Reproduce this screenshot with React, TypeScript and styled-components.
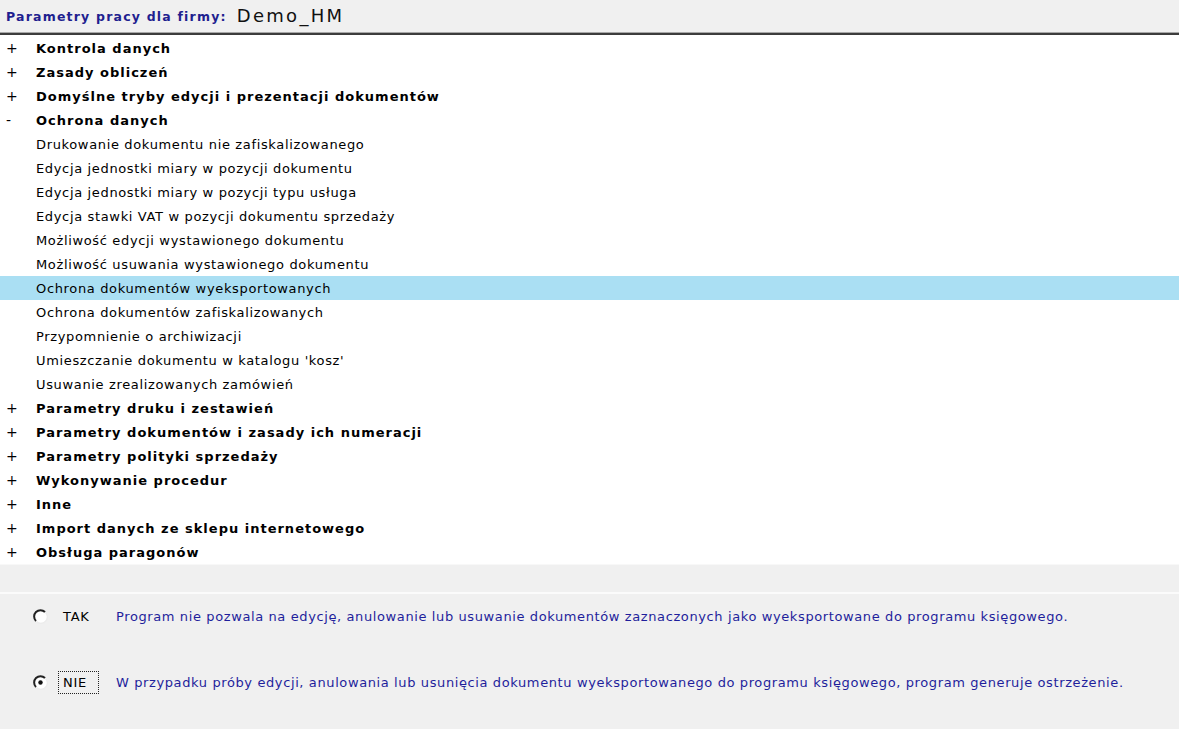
import * as React from 'react'
import styled, { createGlobalStyle } from 'styled-components'

const Global = createGlobalStyle`
  html, body {
    margin: 0;
    padding: 0;
    background: #f0f0f0;
    font-family: 'DejaVu Sans', 'Liberation Sans', sans-serif;
    overflow: hidden;
  }
`

const Page = styled.div`
  width: 1179px;
  height: 729px;
  display: flex;
  flex-direction: column;
  background: #f0f0f0;
`

const Header = styled.header`
  height: 32px;
  display: flex;
  align-items: center;
  gap: 10px;
  padding-left: 6px;
  border-bottom: 1px solid #a8a8a8;
  box-shadow: 0 2px 0 #3c3c3c;
  margin-bottom: 2px;
`

const HeaderLabel = styled.span`
  color: #1f1f8f;
  font-weight: bold;
  font-size: 12.5px;
  letter-spacing: 1.2px;
`

const Company = styled.span`
  color: #111;
  font-size: 18px;
  letter-spacing: 2.3px;
  margin-bottom: 1px;
`

const Tree = styled.ul`
  list-style: none;
  margin: 0;
  padding: 1px 0 0;
  background: #fff;
`

const Row = styled.li<{ $group?: boolean; $selected?: boolean }>`
  height: 24px;
  display: flex;
  align-items: center;
  color: #000;
  font-size: 13px;
  font-weight: ${p => (p.$group ? 'bold' : 'normal')};
  letter-spacing: ${p => (p.$group ? '1px' : '0.65px')};
  background: ${p => (p.$selected ? '#aadff3' : 'transparent')};
  white-space: nowrap;
`

const Sign = styled.span`
  width: 30px;
  padding-left: 6px;
  font-weight: normal;
  font-size: 14px;
  letter-spacing: 0;
`

const Band = styled.div`
  height: 27px;
  border-top: 1px solid #f8f8f8;
  border-bottom: 2px solid #fbfbfb;
`

const Options = styled.div`
  display: flex;
  flex-direction: column;
  gap: 42px;
  padding: 10px 0 0 33px;
`

const Option = styled.label`
  height: 24px;
  display: flex;
  align-items: center;
`

const Radio = styled.svg`
  width: 15px;
  height: 15px;
  flex: none;
`

const Choice = styled.span<{ $focused?: boolean }>`
  margin-left: 10px;
  width: 41px;
  height: 23px;
  box-sizing: border-box;
  display: flex;
  align-items: center;
  padding-left: 4px;
  font-size: 13px;
  letter-spacing: 0.7px;
  color: #000;
  border: 1px dotted ${p => (p.$focused ? '#222' : 'transparent')};
`

const Description = styled.span`
  margin-left: 17px;
  color: #1f1f9c;
  font-size: 13px;
  letter-spacing: 0.61px;
  white-space: nowrap;
`

type Item = { label: string; group?: boolean; open?: boolean; selected?: boolean }

const items: Item[] = [
  { label: 'Kontrola danych', group: true },
  { label: 'Zasady obliczeń', group: true },
  { label: 'Domyślne tryby edycji i prezentacji dokumentów', group: true },
  { label: 'Ochrona danych', group: true, open: true },
  { label: 'Drukowanie dokumentu nie zafiskalizowanego' },
  { label: 'Edycja jednostki miary w pozycji dokumentu' },
  { label: 'Edycja jednostki miary w pozycji typu usługa' },
  { label: 'Edycja stawki VAT w pozycji dokumentu sprzedaży' },
  { label: 'Możliwość edycji wystawionego dokumentu' },
  { label: 'Możliwość usuwania wystawionego dokumentu' },
  { label: 'Ochrona dokumentów wyeksportowanych', selected: true },
  { label: 'Ochrona dokumentów zafiskalizowanych' },
  { label: 'Przypomnienie o archiwizacji' },
  { label: "Umieszczanie dokumentu w katalogu 'kosz'" },
  { label: 'Usuwanie zrealizowanych zamówień' },
  { label: 'Parametry druku i zestawień', group: true },
  { label: 'Parametry dokumentów i zasady ich numeracji', group: true },
  { label: 'Parametry polityki sprzedaży', group: true },
  { label: 'Wykonywanie procedur', group: true },
  { label: 'Inne', group: true },
  { label: 'Import danych ze sklepu internetowego', group: true },
  { label: 'Obsługa paragonów', group: true },
]

// classic sunken radio: dark arc top-left, white well
const RadioIcon: React.FC<{ checked?: boolean }> = ({ checked }) => (
  <Radio viewBox="0 0 15 15">
    <circle cx="7.5" cy="7.5" r="6.5" fill="#fff" />
    <path d="M12 3 A6 6 0 0 0 3 12" fill="none" stroke="#222" strokeWidth="2" />
    <path d="M3.5 12.5 A6 6 0 0 0 12.5 3.5" fill="none" stroke="#ececec" strokeWidth="1.2" />
    {checked && <circle cx="7.5" cy="7.5" r="2.2" fill="#111" />}
  </Radio>
)

const App: React.FC = () => {
  return (
    <Page>
      <Global />
      <Header>
        <HeaderLabel>Parametry pracy dla firmy:</HeaderLabel>
        <Company>Demo_HM</Company>
      </Header>
      <Tree>
        {items.map(item => (
          <Row key={item.label} $group={item.group} $selected={item.selected}>
            <Sign>{item.group ? (item.open ? '-' : '+') : ''}</Sign>
            {item.label}
          </Row>
        ))}
      </Tree>
      <Band />
      <Options>
        <Option>
          <RadioIcon />
          <Choice>TAK</Choice>
          <Description>
            Program nie pozwala na edycję, anulowanie lub usuwanie dokumentów zaznaczonych jako wyeksportowane do programu księgowego.
          </Description>
        </Option>
        <Option>
          <RadioIcon checked />
          <Choice $focused>NIE</Choice>
          <Description>
            W przypadku próby edycji, anulowania lub usunięcia dokumentu wyeksportowanego do programu księgowego, program generuje ostrzeżenie.
          </Description>
        </Option>
      </Options>
    </Page>
  )
}

export default App
